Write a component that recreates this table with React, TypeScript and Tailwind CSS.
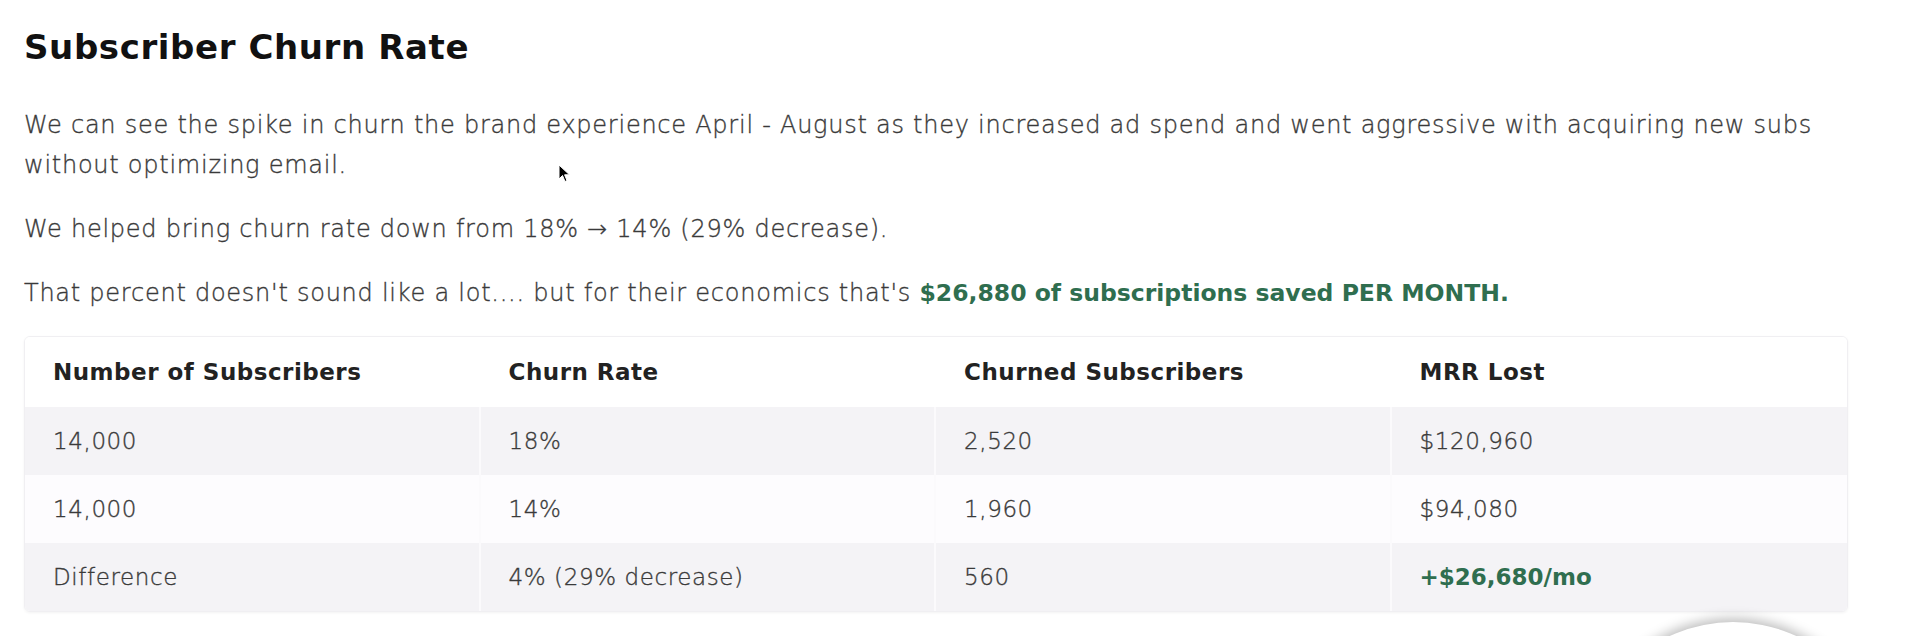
const rows = [
  { subs: "14,000", rate: "18%", churned: "2,520", mrr: "$120,960" },
  { subs: "14,000", rate: "14%", churned: "1,960", mrr: "$94,080" },
  { subs: "Difference", rate: "4% (29% decrease)", churned: "560", mrr: "+$26,680/mo", highlight: true },
];

const headers = ["Number of Subscribers", "Churn Rate", "Churned Subscribers", "MRR Lost"];

export default function App() {
  return (
    <div
      className="relative h-[636px] w-full overflow-hidden bg-white px-[24px] pt-[27px]"
      style={{ fontFamily: "'DejaVu Sans', 'Noto Sans', sans-serif" }}
    >
      <h2 className="text-[34px] font-bold leading-[40px] tracking-[0.6px] text-[#111]">
        Subscriber Churn Rate
      </h2>

      <div className="mt-[38px] w-[1824px] space-y-[24px] text-[24px] font-light leading-[40px] tracking-[0.75px] text-[#3a3a3a] [-webkit-text-stroke:0.35px_#3a3a3a]">
        <p>
          We can see the spike in churn the brand experience April - August as they increased ad spend and went aggressive with acquiring new subs without optimizing email.
        </p>
        <p>We helped bring churn rate down from 18% → 14% (29% decrease).</p>
        <p>
          That percent doesn't sound like a lot.... but for their economics that's{" "}
          <span className="text-[23.5px] font-bold tracking-normal text-[#2f6e4f] [-webkit-text-stroke:0]">$26,880 of subscriptions saved PER MONTH.</span>
        </p>
      </div>

      <div className="mt-[23px] w-[1824px] overflow-hidden rounded-md border border-[#f0eff2] shadow-[0_1px_3px_rgba(0,0,0,0.05)]">
        <div className="grid h-[70px] grid-cols-4 items-center bg-white">
          {headers.map((h) => (
            <div key={h} className="px-[28px] text-[23px] font-bold tracking-[0.5px] text-[#222]">
              {h}
            </div>
          ))}
        </div>
        {rows.map((r, i) => (
          <div
            key={i}
            className={`grid h-[68px] grid-cols-4 text-[23px] font-light tracking-[0.6px] text-[#3a3a3a] [-webkit-text-stroke:0.35px_#3a3a3a] ${i % 2 === 0 ? "bg-[#f4f3f6]" : "bg-[#fdfcfe]"}`}
          >
            <div className="flex items-center border-r-2 border-[#fbfafc] px-[28px]">{r.subs}</div>
            <div className="flex items-center border-r-2 border-[#fbfafc] px-[28px]">{r.rate}</div>
            <div className="flex items-center border-r-2 border-[#fbfafc] px-[28px]">{r.churned}</div>
            <div className={`flex items-center px-[28px] ${r.highlight ? "font-bold tracking-normal text-[#2f6e4f] [-webkit-text-stroke:0]" : ""}`}>{r.mrr}</div>
          </div>
        ))}
      </div>

      {/* mouse cursor */}
      <svg className="absolute left-[558px] top-[164px]" width="13" height="19" viewBox="0 0 13 19">
        <path d="M1 1 L1 15 L4.5 11.5 L7 17.5 L9 16.6 L6.6 10.8 L11.5 10.8 Z" fill="#000" stroke="#fff" strokeWidth="1" />
      </svg>

      {/* webcam bubble edge */}
      <div className="absolute left-[1583px] top-[622px] h-[300px] w-[300px] rounded-full bg-white shadow-[0_-4px_12px_rgba(0,0,0,0.25)]" />
    </div>
  );
}
